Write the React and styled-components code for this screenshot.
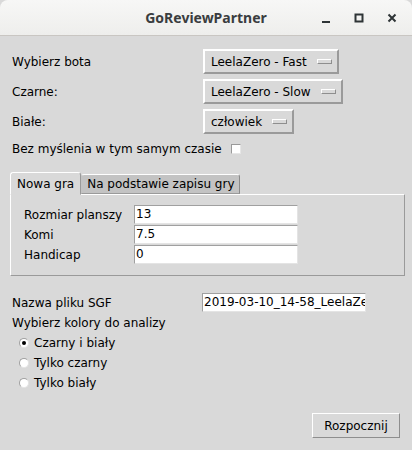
import React from "react";
import styled, { createGlobalStyle } from "styled-components";

const GlobalStyle = createGlobalStyle`
  html, body {
    margin: 0;
    padding: 0;
    background: #d9d9d9;
  }
`;

const Window = styled.div`
  width: 412px;
  height: 450px;
  background: #d9d9d9;
  display: flex;
  flex-direction: column;
  font-family: "DejaVu Sans", "Noto Sans", sans-serif;
  font-size: 12px;
  color: #000;
  overflow: hidden;
`;

const TitleBar = styled.header`
  height: 35px;
  flex: none;
  display: grid;
  grid-template-columns: 1fr auto 1fr;
  align-items: center;
  background: linear-gradient(#f7f7f6, #eeeeec);
  border-bottom: 1px solid #c9c6c2;
  border-radius: 8px 8px 0 0;
`;

const Title = styled.h1`
  grid-column: 2;
  margin: 0;
  font-family: "Noto Sans", "DejaVu Sans", sans-serif;
  font-size: 14px;
  font-weight: 700;
  color: #3a3d3f;
`;

const Controls = styled.div`
  grid-column: 3;
  justify-self: end;
  display: flex;
  align-items: center;
  gap: 17px;
  padding-right: 12px;
`;

const ControlIcon = styled.svg`
  width: 16px;
  height: 16px;
  display: block;
`;

const Body = styled.main`
  display: flex;
  flex-direction: column;
  padding: 13px 0 0 12px;
`;

const TopGrid = styled.div`
  display: grid;
  grid-template-columns: 191px auto;
  grid-auto-rows: 25px;
  row-gap: 5px;
  align-items: center;
  justify-items: start;
`;

const Label = styled.span`
  line-height: 18px;
  white-space: nowrap;
`;

const OptionButton = styled.div`
  height: 25px;
  box-sizing: border-box;
  display: inline-flex;
  align-items: center;
  gap: 10px;
  padding: 0 5px 0 6px;
  border: 2px solid;
  border-color: #ffffff #9a9a9a #9a9a9a #ffffff;
  white-space: nowrap;
`;

const Indicator = styled.span`
  width: 15px;
  height: 5px;
  box-sizing: border-box;
  border: 1px solid;
  border-color: #ffffff #8e8e8e #8e8e8e #ffffff;
  background: #d9d9d9;
`;

const CheckRow = styled.div`
  display: flex;
  align-items: center;
  gap: 9px;
  height: 19px;
  margin-top: 5px;
`;

const CheckBox = styled.span`
  width: 10px;
  height: 10px;
  box-sizing: border-box;
  background: #ffffff;
  border: 1px solid;
  border-color: #9a9a9a #e6e6e6 #e6e6e6 #9a9a9a;
`;

const Notebook = styled.section`
  margin: 15px 7px 0 -2px;
  display: flex;
  flex-direction: column;
`;

const TabRow = styled.div`
  display: flex;
  align-items: flex-end;
  height: 22px;
  margin-bottom: -1px;
  position: relative;
  z-index: 1;
`;

const Tab = styled.div`
  box-sizing: border-box;
  height: ${(p) => (p.$active ? "23px" : "20px")};
  padding: 0 ${(p) => (p.$active ? "6px" : "4px")} 0 ${(p) => (p.$active ? "6px" : "5px")};
  display: flex;
  align-items: center;
  background: ${(p) => (p.$active ? "#d9d9d9" : "#c3c3c3")};
  border: 1px solid;
  border-color: ${(p) =>
    p.$active ? "#ffffff #9a9a9a transparent #ffffff" : "#ffffff #8a8a8a #9a9a9a #c3c3c3"};
  border-radius: 3px 3px 0 0;
  margin-bottom: ${(p) => (p.$active ? "0" : "1px")};
  white-space: nowrap;
`;

const Pane = styled.div`
  box-sizing: border-box;
  height: 82px;
  border: 1px solid;
  border-color: #ffffff #9a9a9a #9a9a9a #ffffff;
  padding: 10px 0 0 13px;
  display: grid;
  grid-template-columns: 110px 164px;
  grid-auto-rows: 19px;
  row-gap: 1px;
  align-items: center;
`;

const Entry = styled.div`
  box-sizing: border-box;
  height: 19px;
  width: 164px;
  background: #ffffff;
  border: 1px solid;
  border-color: #a0a0a0 #e4e4e4 #e4e4e4 #a0a0a0;
  padding-left: 1px;
  line-height: 17px;
  white-space: nowrap;
  overflow: hidden;
`;

const SgfRow = styled.div`
  display: grid;
  grid-template-columns: 190px auto;
  align-items: center;
  margin-top: 17px;
  height: 19px;
`;

const SubLabel = styled.div`
  height: 20px;
  line-height: 20px;
  margin-top: 1px;
`;

const RadioList = styled.div`
  display: flex;
  flex-direction: column;
  padding-left: 7px;
`;

const RadioRow = styled.label`
  display: flex;
  align-items: center;
  gap: 5px;
  height: 20px;
  line-height: 20px;
`;

const RadioDot = styled.span`
  width: 10px;
  height: 10px;
  box-sizing: border-box;
  border-radius: 50%;
  background: #ffffff;
  border: 1px solid;
  border-color: #a0a0a0 #e4e4e4 #e4e4e4 #a0a0a0;
  display: flex;
  align-items: center;
  justify-content: center;

  &::after {
    content: "";
    width: 4px;
    height: 4px;
    border-radius: 50%;
    background: ${(p) => (p.$checked ? "#000" : "transparent")};
  }
`;

const Footer = styled.div`
  display: flex;
  justify-content: flex-end;
  padding-right: 12px;
  margin-top: 20px;
`;

const Button = styled.div`
  box-sizing: border-box;
  width: 88px;
  height: 25px;
  display: flex;
  align-items: center;
  justify-content: center;
  border: 1px solid;
  border-color: #ffffff #8e8e8e #8e8e8e #ffffff;
`;

const botRows = [
  { label: "Wybierz bota", value: "LeelaZero - Fast" },
  { label: "Czarne:", value: "LeelaZero - Slow" },
  { label: "Białe:", value: "człowiek" },
];

const gameFields = [
  { label: "Rozmiar planszy", value: "13" },
  { label: "Komi", value: "7.5" },
  { label: "Handicap", value: "0" },
];

const colorOptions = ["Czarny i biały", "Tylko czarny", "Tylko biały"];

export default function App() {
  return (
    <Window>
      <GlobalStyle />
      <TitleBar>
        <Title>GoReviewPartner</Title>
        <Controls>
          <ControlIcon viewBox="0 0 16 16">
            <rect x="4" y="11" width="8" height="2" fill="#2e3436" />
          </ControlIcon>
          <ControlIcon viewBox="0 0 16 16">
            <rect x="4.5" y="4.5" width="7" height="7" fill="none" stroke="#2e3436" strokeWidth="2" />
          </ControlIcon>
          <ControlIcon viewBox="0 0 16 16">
            <path d="M4.5 4.5l7 7M11.5 4.5l-7 7" stroke="#2e3436" strokeWidth="2" />
          </ControlIcon>
        </Controls>
      </TitleBar>
      <Body>
        <TopGrid>
          {botRows.map((r) => (
            <React.Fragment key={r.label}>
              <Label>{r.label}</Label>
              <OptionButton>
                {r.value}
                <Indicator />
              </OptionButton>
            </React.Fragment>
          ))}
        </TopGrid>
        <CheckRow>
          <Label>Bez myślenia w tym samym czasie</Label>
          <CheckBox />
        </CheckRow>
        <Notebook>
          <TabRow>
            <Tab $active>Nowa gra</Tab>
            <Tab>Na podstawie zapisu gry</Tab>
          </TabRow>
          <Pane>
            {gameFields.map((f) => (
              <React.Fragment key={f.label}>
                <Label>{f.label}</Label>
                <Entry>{f.value}</Entry>
              </React.Fragment>
            ))}
          </Pane>
        </Notebook>
        <SgfRow>
          <Label>Nazwa pliku SGF</Label>
          <Entry>2019-03-10_14-58_LeelaZero</Entry>
        </SgfRow>
        <SubLabel>Wybierz kolory do analizy</SubLabel>
        <RadioList>
          {colorOptions.map((o, i) => (
            <RadioRow key={o}>
              <RadioDot $checked={i === 0} />
              {o}
            </RadioRow>
          ))}
        </RadioList>
        <Footer>
          <Button>Rozpocznij</Button>
        </Footer>
      </Body>
    </Window>
  );
}
